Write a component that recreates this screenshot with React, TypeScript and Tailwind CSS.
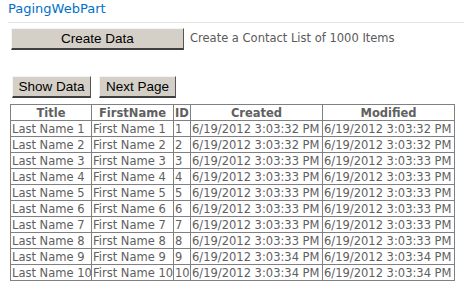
import React from "react";

const rows = [
  ["Last Name 1", "First Name 1", "1", "6/19/2012 3:03:32 PM", "6/19/2012 3:03:32 PM"],
  ["Last Name 2", "First Name 2", "2", "6/19/2012 3:03:32 PM", "6/19/2012 3:03:32 PM"],
  ["Last Name 3", "First Name 3", "3", "6/19/2012 3:03:33 PM", "6/19/2012 3:03:33 PM"],
  ["Last Name 4", "First Name 4", "4", "6/19/2012 3:03:33 PM", "6/19/2012 3:03:33 PM"],
  ["Last Name 5", "First Name 5", "5", "6/19/2012 3:03:33 PM", "6/19/2012 3:03:33 PM"],
  ["Last Name 6", "First Name 6", "6", "6/19/2012 3:03:33 PM", "6/19/2012 3:03:33 PM"],
  ["Last Name 7", "First Name 7", "7", "6/19/2012 3:03:33 PM", "6/19/2012 3:03:33 PM"],
  ["Last Name 8", "First Name 8", "8", "6/19/2012 3:03:33 PM", "6/19/2012 3:03:33 PM"],
  ["Last Name 9", "First Name 9", "9", "6/19/2012 3:03:34 PM", "6/19/2012 3:03:34 PM"],
  ["Last Name 10", "First Name 10", "10", "6/19/2012 3:03:34 PM", "6/19/2012 3:03:34 PM"],
];

const btn =
  "h-[22px] bg-[#d4d0c8] border border-t-[#f4f4f4] border-l-[#f4f4f4] border-r-[#555] border-b-[#404040] border-b-2 text-[13.5px] text-black font-['Liberation_Sans',Arial,sans-serif] leading-none flex items-center justify-center";

export default function App() {
  return (
    <div className="w-[464px] h-[305px] bg-white font-['DejaVu_Sans',Verdana,sans-serif] overflow-hidden">
      <div className="pl-[8px] pt-[1px]">
        <div className="text-[13px] leading-[16px] text-[#0072c6] h-[21px]">PagingWebPart</div>
        <div className="h-px bg-[#e3e3e3]" />
      </div>
      <div className="flex items-center mt-[5px] pl-[11px]">
        <div className={btn + " w-[173px]"}>Create Data</div>
        <span className="ml-[6px] text-[11.5px] text-[#5a5a5a]">Create a Contact List of 1000 Items</span>
      </div>
      <div className="flex mt-[26px] pl-[12px] gap-[8px]">
        <div className={btn + " w-[79px]"}>Show Data</div>
        <div className={btn + " w-[77px]"}>Next Page</div>
      </div>
      <table className="ml-[10px] mt-[6px] border-collapse border border-[#808080] text-[11.5px] text-[#606060] table-fixed w-[444px]">
        <colgroup>
          <col className="w-[81px]" />
          <col className="w-[82px]" />
          <col className="w-[17px]" />
          <col className="w-[132px]" />
          <col className="w-[132px]" />
        </colgroup>
        <thead>
          <tr className="h-[16px]">
            {["Title", "FirstName", "ID", "Created", "Modified"].map((h) => (
              <th key={h} className="border border-[#808080] font-bold text-center px-0 py-0 leading-[14px] whitespace-nowrap">
                {h}
              </th>
            ))}
          </tr>
        </thead>
        <tbody>
          {rows.map((r, i) => (
            <tr key={i} className="h-[16px]">
              {r.map((c, j) => (
                <td key={j} className="border border-[#808080] px-[1px] py-0 leading-[14px] whitespace-nowrap overflow-hidden">
                  {c}
                </td>
              ))}
            </tr>
          ))}
        </tbody>
      </table>
    </div>
  );
}
